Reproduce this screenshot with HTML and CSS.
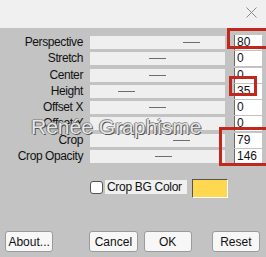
FILE: index.html
```
<!DOCTYPE html>
<html lang="en">
<head>
    <meta charset="UTF-8">
    <title>Perspective</title>
    <link rel="stylesheet" href="styles.css">
</head>
<body>
    <div class="dialog">
        <div class="titlebar">
            <svg class="close" width="11" height="11" viewBox="0 0 11 11">
                <path d="M0.5 0.5 L10.5 10.5 M10.5 0.5 L0.5 10.5" stroke="#8a8a8a" stroke-width="1" fill="none"/>
            </svg>
        </div>

        <div class="params">
            <div class="row">
                <label>Perspective</label>
                <div class="bar"><span class="thumb" style="margin-left:93px"></span></div>
                <div class="value">80</div>
            </div>
            <div class="row">
                <label>Stretch</label>
                <div class="bar"><span class="thumb" style="margin-left:59px"></span></div>
                <div class="value">0</div>
            </div>
            <div class="row">
                <label>Center</label>
                <div class="bar"><span class="thumb" style="margin-left:59px"></span></div>
                <div class="value">0</div>
            </div>
            <div class="row">
                <label>Height</label>
                <div class="bar"><span class="thumb" style="margin-left:28px"></span></div>
                <div class="value">35</div>
            </div>
            <div class="row">
                <label>Offset X</label>
                <div class="bar"><span class="thumb" style="margin-left:59px"></span></div>
                <div class="value">0</div>
            </div>
            <div class="row">
                <label>Offset Y</label>
                <div class="bar"><span class="thumb" style="margin-left:59px"></span></div>
                <div class="value">0</div>
            </div>
            <div class="row">
                <label>Crop</label>
                <div class="bar"><span class="thumb" style="margin-left:83px"></span></div>
                <div class="value">79</div>
            </div>
            <div class="row">
                <label>Crop Opacity</label>
                <div class="bar"><span class="thumb" style="margin-left:65px"></span></div>
                <div class="value">146</div>
            </div>

            <div class="mark mark-80"></div>
            <div class="mark mark-35"></div>
            <div class="mark mark-crop"></div>
            <div class="watermark">Renée Graphisme</div>
        </div>

        <div class="bgcolor">
            <span class="check"></span>
            <span class="check-label">Crop BG Color</span>
            <span class="swatch"></span>
        </div>

        <div class="buttons">
            <button class="btn">About...</button>
            <button class="btn btn-cancel">Cancel</button>
            <button class="btn">OK</button>
            <button class="btn btn-reset">Reset</button>
        </div>
    </div>
</body>
</html>
```

FILE: styles.css
```
body {
    margin: 0;
    background-color: #c3c3c3;
    font-family: "Liberation Sans", Arial, sans-serif;
    font-size: 12px;
    color: #111;
}
.dialog {
    width: 266px;
    height: 257px;
    display: flex;
    flex-direction: column;
}
.titlebar {
    height: 28px;
    background-color: #f0f0f0;
    display: flex;
    justify-content: flex-end;
    align-items: flex-start;
}
.close {
    margin: 7px 9px 0 0;
}
.params {
    position: relative;
    margin-top: 8px;
    display: flex;
    flex-direction: column;
    gap: 3.3px;
}
.row {
    display: flex;
    align-items: flex-start;
    height: 13px;
}
.row label {
    width: 83px;
    text-align: right;
    line-height: 13px;
    letter-spacing: -0.4px;
}
.bar {
    margin-left: 7px;
    width: 135px;
    height: 13px;
    background-color: #efefef;
    display: flex;
    align-items: center;
}
.thumb {
    width: 17px;
    height: 1px;
    background-color: #6d6d6d;
}
.value {
    margin-left: 9px;
    margin-top: -1px;
    width: 28px;
    height: 15px;
    background-color: #fff;
    border-left: 1px solid #6a6a6a;
    padding-left: 2px;
    box-sizing: border-box;
    line-height: 15px;
}
.mark {
    position: absolute;
    border: 3px solid #c1271a;
}
.mark-80 {
    left: 227px;
    top: -8px;
    width: 36px;
    height: 15px;
}
.mark-35 {
    left: 229px;
    top: 40px;
    width: 22px;
    height: 14px;
}
.mark-crop {
    left: 219px;
    top: 91px;
    width: 44px;
    height: 33px;
}
.watermark {
    position: absolute;
    left: 31px;
    top: 79px;
    font-family: "Liberation Sans", sans-serif;
    font-size: 21px;
    line-height: 24px;
    color: #e6e6e6;
    text-shadow: 1px 1px 0 #555, -1px 0 0 #777, 0 -1px 0 #999;
}
.bgcolor {
    margin-top: 17px;
    padding-left: 90px;
    display: flex;
    align-items: flex-start;
}
.check {
    width: 11px;
    height: 11px;
    margin-top: 1px;
    background-color: #fff;
    border: 1px solid #555;
    border-radius: 3px;
}
.check-label {
    margin-left: 2px;
    width: 80px;
    height: 14px;
    line-height: 14px;
    padding-left: 2px;
    background-color: #f0f0f0;
    letter-spacing: -0.3px;
}
.swatch {
    margin-left: 5px;
    margin-top: -1px;
    width: 34px;
    height: 17px;
    background-color: #ffd84f;
    border-top: 1px solid #555;
    border-left: 1px solid #555;
    border-bottom: 1px solid #fff;
    border-right: 1px solid #fff;
}
.buttons {
    margin-top: 33px;
    padding-left: 5px;
    display: flex;
}
.btn {
    width: 49px;
    height: 21px;
    padding: 0;
    font-family: inherit;
    font-size: 12px;
    color: #111;
    background-color: #f7f7f7;
    border: 1px solid #9a9a9a;
    border-radius: 3px;
    margin-right: 6px;
}
.btn-cancel {
    margin-left: 30px;
}
.btn-reset {
    margin-left: 14px;
}
```
